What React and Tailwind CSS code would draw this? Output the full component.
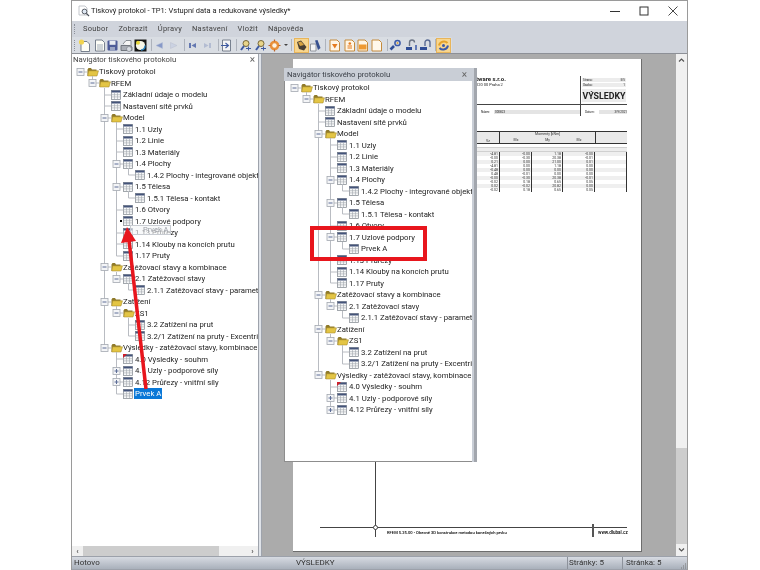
import React from "react";

const font = { fontFamily: 'Roboto, "Open Sans", sans-serif' };

const T = (label, children, extra = {}) => ({ label, children, ...extra });
const F = (label, children, extra = {}) => ({ label, children, folder: true, ...extra });

const head = [T("Základní údaje o modelu"), T("Nastavení sítě prvků")];

const model = (withPrvek) =>
  F("Model", [
    T("1.1 Uzly"),
    T("1.2 Linie"),
    T("1.3 Materiály"),
    T("1.4 Plochy", [T("1.4.2 Plochy - integrované objekty")]),
    T("1.5 Tělesa", [T("1.5.1 Tělesa - kontakt")]),
    T("1.6 Otvory"),
    withPrvek
      ? T("1.7 Uzlové podpory", [T("Prvek A")])
      : T("1.7 Uzlové podpory", null, { dot: true }),
    T("1.13 Průřezy"),
    T("1.14 Klouby na koncích prutu"),
    T("1.17 Pruty"),
  ]);

const rest = (withPrvek) => [
  F("Zatěžovací stavy a kombinace", [
    T("2.1 Zatěžovací stavy", [T("2.1.1 Zatěžovací stavy - parametry")]),
  ]),
  F("Zatížení", [
    F("ZS1", [T("3.2 Zatížení na prut"), T("3.2/1 Zatížení na pruty - Excentricity")]),
  ]),
  F("Výsledky - zatěžovací stavy, kombinace a zatížení", [
    T("4.0 Výsledky - souhrn", null, { flag: true }),
    T("4.1 Uzly - podporové síly", null, { plus: true }),
    T("4.12 Průřezy - vnitřní síly", null, { plus: true }),
    ...(withPrvek ? [] : [T("Prvek A", null, { selected: true })]),
  ]),
];

const tree = (withPrvek) => [
  F("Tiskový protokol", [F("RFEM", [...head, model(withPrvek), ...rest(withPrvek)])]),
];

function Folder() {
  return (
    <svg width="12" height="10" viewBox="0 0 12 10" className="shrink-0">
      <path d="M0.5 2.5 L0.5 9 L9.5 9 L9.5 2.5 L5 2.5 L4 1 L1.5 1 Z" fill="#8f7a2a" />
      <path d="M1.5 3.8 L11.5 3.8 L10 9 L0.8 9 Z" fill="#e3c545" stroke="#9c8226" strokeWidth="0.5" />
    </svg>
  );
}

function TableIcon({ flag }) {
  return (
    <svg width="10" height="10" viewBox="0 0 10 10" className="shrink-0">
      <rect x="0.5" y="0.5" width="9" height="9" fill="#f6f7f8" stroke="#7d838b" strokeWidth="0.7" />
      <rect x="0.5" y="0.5" width="9" height="2" fill="#44547a" />
      <path d="M0.5 4.7H9.5M0.5 6.9H9.5M3.5 2.5V9.5M6.5 2.5V9.5" stroke="#a3a8af" strokeWidth="0.6" />
      {flag && <path d="M0 0L4 0L0 4Z" fill="#d0202a" />}
    </svg>
  );
}

function Guides({ level, ancestors, hasBox, plus, isLast, hasParent, dot }) {
  const w = 12 * (level + 1) + 1;
  const cx = 12 * level + 6;
  const stroke = "#b9bcc2";
  return (
    <svg width={w} height="12" viewBox={`0 0 ${w} 12`} className="shrink-0 overflow-visible">
      {ancestors.map((on, i) =>
        on ? <path key={i} d={`M${12 * i + 6.5} -1V13`} stroke={stroke} strokeWidth="1" /> : null
      )}
      {hasParent && <path d={`M${cx + 0.5} -1V${isLast ? 6 : 13}`} stroke={stroke} strokeWidth="1" />}
      {!dot && <path d={`M${cx + 0.5} 6H${w}`} stroke={stroke} strokeWidth="1" />}
      {hasBox && (
        <g>
          <rect x={cx - 3} y="2.5" width="7" height="7" fill="#f4f5f7" stroke="#a3a8b0" strokeWidth="0.8" />
          <path d={`M${cx - 1.5} 6H${cx + 2.5}`} stroke="#5c6d96" strokeWidth="1" />
          {plus && <path d={`M${cx + 0.5} 4V8`} stroke="#5c6d96" strokeWidth="1" />}
        </g>
      )}
      {dot && <rect x={w - 3} y="5" width="2" height="2" fill="#000" />}
    </svg>
  );
}

function Rows({ nodes, level = 0, ancestors = [], hasParent = false }) {
  return nodes.map((n, i) => {
    const isLast = i === nodes.length - 1;
    const kids = n.children && n.children.length > 0;
    return (
      <React.Fragment key={n.label}>
        <div className="flex h-[11.5px] items-center whitespace-nowrap">
          <Guides
            level={level}
            ancestors={ancestors}
            hasBox={kids || n.plus}
            plus={n.plus}
            isLast={isLast}
            hasParent={hasParent}
            dot={n.dot}
          />
          {n.folder ? <Folder /> : <TableIcon flag={n.flag} />}
          <span
            className={
              n.selected
                ? "ml-[1px] bg-[#0a78d7] px-[1px] text-[7.75px] leading-[11px] text-white"
                : n.folder
                  ? "text-[7.75px] leading-[11px] text-[#1c1c1c]"
                  : "ml-[2px] text-[7.75px] leading-[11px] text-[#1c1c1c]"
            }
          >
            {n.label}
          </span>
        </div>
        {kids && (
          <Rows
            nodes={n.children}
            level={level + 1}
            ancestors={[...ancestors.slice(0, level), hasParent && !isLast]}
            hasParent
          />
        )}
      </React.Fragment>
    );
  });
}

function ToolIcon({ kind, className = "" }) {
  const c = {
    page: (
      <g>
        <path d="M2.5 1H9L11.5 3.5V12H2.5Z" fill="#fdfdf6" stroke="#6b7584" strokeWidth="0.9" />
        <path d="M4 6H10M4 8H10M4 10H10" stroke="#7d8aa0" strokeWidth="0.7" />
      </g>
    ),
    newp: (
      <g>
        <path d="M3 2.5H9L11.5 5V12.5H3Z" fill="#fdfdf6" stroke="#6b7584" strokeWidth="0.9" />
        <circle cx="3.5" cy="3" r="2.6" fill="#f2d44e" />
      </g>
    ),
    save: (
      <g>
        <rect x="1.5" y="1.5" width="10" height="10" rx="1" fill="#4d5b98" />
        <rect x="3.5" y="1.8" width="6" height="4" fill="#e8ebf2" />
        <rect x="4" y="8" width="5" height="3.5" fill="#9aa4c4" />
      </g>
    ),
    print: (
      <g>
        <path d="M3 5L6 1.5H11V7" fill="#f5f5f5" stroke="#70767e" strokeWidth="0.8" />
        <path d="M1 6.5H10L12 8V11.5H1Z" fill="#a9adb5" stroke="#5e636b" strokeWidth="0.8" />
        <circle cx="9" cy="10" r="2.5" fill="#d9dde3" stroke="#70767e" strokeWidth="0.6" />
      </g>
    ),
    spin: (
      <g>
        <rect x="0.5" y="0.5" width="12" height="12" fill="#161616" />
        <circle cx="6.5" cy="6.5" r="4.6" fill="#f6f6e8" />
        <circle cx="4" cy="3.8" r="2" fill="#e6d638" />
        <path d="M11 6.5A4.5 4.5 0 0 1 7 11" stroke="#2f87c4" strokeWidth="1.4" fill="none" />
      </g>
    ),
    left: <path d="M3 6.5L9.5 3.5V9.5Z" fill="#8799c8" stroke="#b3bcd4" strokeWidth="0.5" />,
    right: <path d="M10 6.5L3.5 3.5V9.5Z" fill="#cbd2e2" stroke="#b8bfcf" strokeWidth="0.5" />,
    first: (
      <g fill="#6478b1">
        <rect x="3" y="4" width="2" height="5" />
        <path d="M5.5 6.5L10 4V9Z" />
      </g>
    ),
    last: (
      <g fill="#b3bcd2">
        <rect x="8" y="4" width="2" height="5" />
        <path d="M7.5 6.5L3 4V9Z" />
      </g>
    ),
    goto: (
      <g>
        <path d="M2.5 1H10.5V12H2.5Z" fill="#f5f5f5" stroke="#6b7584" strokeWidth="0.9" />
        <path d="M1 6.5H8M5.5 4L8.5 6.5L5.5 9" stroke="#3e5aa0" strokeWidth="1.1" fill="none" />
      </g>
    ),
    find: (
      <g>
        <circle cx="7" cy="4.5" r="3" fill="#e9d58a" stroke="#6a5a2c" strokeWidth="0.9" />
        <path d="M5 7L2 11" stroke="#3e5aa0" strokeWidth="2" />
        <path d="M7 9.5H12M9.5 7.5V11.5" stroke="#3e5aa0" strokeWidth="1" />
      </g>
    ),
    gear: (
      <g>
        <circle cx="6.5" cy="6.5" r="4.8" fill="#e8903a" />
        <circle cx="6.5" cy="6.5" r="2.2" fill="#fdf3e3" />
        <path d="M6.5 0.5V2.5M6.5 10.5V12.5M0.5 6.5H2.5M10.5 6.5H12.5" stroke="#b9642a" strokeWidth="1.2" />
      </g>
    ),
    hand: (
      <g>
        <path d="M2 3L6 1.5L11.5 8L9 11.5L4 10Z" fill="#4a4034" />
        <path d="M3 3.5L6 2.5L9 6L5 7Z" fill="#d9a441" />
      </g>
    ),
    hand2: (
      <g>
        <path d="M1.5 5H7V12H1.5Z" fill="#f3f4f6" stroke="#7d838c" strokeWidth="0.8" />
        <path d="M6 1.5L8.5 1L11.5 9L9 11Z" fill="#36508f" />
      </g>
    ),
    docO: (
      <g>
        <path d="M2 1H9L11.5 3.5V12H2Z" fill="#fff6e6" stroke="#c48a3c" strokeWidth="1" />
        <path d="M4 5H9.5L6.8 9.5Z" fill="#e57b1f" />
      </g>
    ),
    docB: (
      <g>
        <path d="M2 1H9L11.5 3.5V12H2Z" fill="#fff6e6" stroke="#c48a3c" strokeWidth="1" />
        <path d="M4.5 7H9M4.5 9H9" stroke="#e57b1f" strokeWidth="1.1" />
        <circle cx="6.8" cy="4.5" r="1.3" fill="#e57b1f" />
      </g>
    ),
    docF: (
      <g>
        <path d="M2 1H9L11.5 3.5V12H2Z" fill="#fff6e6" stroke="#c48a3c" strokeWidth="1" />
        <rect x="3" y="5.5" width="7.5" height="5" fill="#ee9a33" />
      </g>
    ),
    docE: <path d="M2 1H9L11.5 3.5V12H2Z" fill="#fff8ec" stroke="#c48a3c" strokeWidth="1" />,
    link1: (
      <g>
        <path d="M1.5 10.5L5 7" stroke="#2f4d96" strokeWidth="2.6" />
        <circle cx="8.5" cy="4" r="2.6" fill="none" stroke="#3b5aa8" strokeWidth="1.5" />
        <circle cx="8.5" cy="4" r="1" fill="#d9a441" />
      </g>
    ),
    link2: (
      <g>
        <path d="M1 9.5H7" stroke="#2f4d96" strokeWidth="3" />
        <path d="M4.5 7V3.5A2.5 2.5 0 0 1 9.5 3.5" fill="none" stroke="#6d7686" strokeWidth="1.4" />
        <path d="M11 6V11" stroke="#3b5aa8" strokeWidth="1.5" />
      </g>
    ),
    link3: (
      <g>
        <path d="M1 9.5H8" stroke="#2f4d96" strokeWidth="3" />
        <path d="M6 7V3.5A2.5 2.5 0 0 1 11 3.5V8" fill="none" stroke="#5a6b94" strokeWidth="1.4" />
      </g>
    ),
    ring: (
      <g>
        <path d="M10.5 4A5 5 0 0 0 2 6.5" fill="none" stroke="#e5a32a" strokeWidth="2" />
        <path d="M2.5 9A5 5 0 0 0 11 6.5" fill="none" stroke="#3b5aa8" strokeWidth="2" />
        <circle cx="6.5" cy="6.5" r="1.5" fill="#3b5aa8" />
      </g>
    ),
  }[kind];
  return (
    <svg width="13" height="13" viewBox="0 0 13 13" className={"shrink-0 " + className}>
      {c}
    </svg>
  );
}

function Active({ kind, className = "" }) {
  return (
    <div className={"flex h-[15px] w-[15px] shrink-0 items-center justify-center border border-[#e8b55b] bg-[#f8d68e] " + className}>
      <ToolIcon kind={kind} />
    </div>
  );
}

const Sep = ({ className = "" }) => <div className={"h-[12px] w-px shrink-0 bg-[#aeb3bc] " + className} />;

function Toolbar() {
  return (
    <div className="flex h-[16px] w-[380px] items-center rounded-r-[2px] bg-[#d9dde3] pl-[2px]">
      <div className="mr-[2px] h-[11px] w-[2px] shrink-0 border-l border-dotted border-[#8b909a]" />
      <ToolIcon kind="newp" />
      <ToolIcon kind="page" className="ml-[2px]" />
      <ToolIcon kind="save" />
      <ToolIcon kind="print" className="ml-[1px]" />
      <ToolIcon kind="spin" className="ml-[1px]" />
      <Sep className="ml-[3.5px]" />
      <ToolIcon kind="left" className="ml-[1.5px]" />
      <ToolIcon kind="right" className="ml-[1px]" />
      <Sep className="ml-[3.5px]" />
      <ToolIcon kind="first" className="ml-[1.5px]" />
      <ToolIcon kind="last" className="ml-[2px]" />
      <Sep className="ml-[3.5px]" />
      <ToolIcon kind="goto" className="ml-[1.5px]" />
      <Sep className="ml-[2.5px]" />
      <ToolIcon kind="find" className="ml-[2.5px]" />
      <ToolIcon kind="find" className="ml-[2px]" />
      <ToolIcon kind="gear" className="ml-[1px]" />
      <span className="ml-[2.5px] h-0 w-0 shrink-0 border-x-[2px] border-t-[2px] border-x-transparent border-t-[#444]" />
      <Sep className="ml-[3px]" />
      <Active kind="hand" className="ml-[2.5px]" />
      <ToolIcon kind="hand2" />
      <Sep className="ml-[2.5px]" />
      <ToolIcon kind="docO" className="ml-[2.5px]" />
      <ToolIcon kind="docB" className="ml-[2px]" />
      <ToolIcon kind="docF" />
      <ToolIcon kind="docE" className="ml-[1px]" />
      <Sep className="ml-[3.5px]" />
      <ToolIcon kind="link1" className="ml-[1.5px]" />
      <ToolIcon kind="link2" className="ml-[3px]" />
      <ToolIcon kind="link3" className="ml-[1px]" />
      <Sep className="ml-[2.5px]" />
      <Active kind="ring" className="ml-[0.5px]" />
    </div>
  );
}

const dataRows = [
  ["-4.81", "-0.00", "1.18", "-0.00"],
  ["-0.00", "-0.30", "20.38", "-0.01"],
  ["0.21", "0.00", "21.00", "0.01"],
  ["-4.81", "0.00", "1.18", "0.00"],
  ["-0.48", "0.00", "0.00", "0.00"],
  ["0.48", "-0.01", "0.00", "0.00"],
  ["-0.00", "-0.30", "20.38", "-0.01"],
  ["-0.02", "0.18", "0.65", "0.05"],
  ["0.02", "-0.02", "20.82", "0.00"],
  ["-0.02", "0.18", "0.65", "0.05"],
];

function DocPage() {
  return (
    <div className="relative ml-[31px] mt-[5px] h-[493px] w-[349px] border-b border-r border-[#6d6d6d] bg-white text-[#222]">
      <div className="flex h-[29px] pl-[183px] pt-[17px]">
        <div className="w-[104px] leading-[5px]">
          <div className="text-[6px] font-bold">tware s.r.o.</div>
          <div className="mt-[1px] text-[4px]">120 00 Praha 2</div>
        </div>
      </div>
      <div className="absolute left-[287px] top-[17px] h-[40px] w-px bg-[#444]" />
      <div className="absolute left-[289px] top-[19px] w-[44px]">
        <div className="flex h-[4px] items-center justify-between bg-[#ececec] px-px text-[3px]">
          <span>Strana:</span>
          <span>5/5</span>
        </div>
        <div className="mt-[1px] flex h-[4px] items-center justify-between bg-[#ececec] px-px text-[3px]">
          <span>Osoba:</span>
          <span>1</span>
        </div>
        <div className="mt-[2px] flex h-[13px] items-center justify-center bg-[#ececec] pt-[1px] text-[8.8px] font-bold leading-none text-[#222]">
          VÝSLEDKY
        </div>
      </div>
      <div className="ml-[183px] mt-[16px] h-px w-[151px] bg-[#444]" />
      <div className="ml-[188px] mt-[5px] flex h-[4px] w-[146px] items-center gap-[1px] text-[3px]">
        <span className="w-[12px]">Název:</span>
        <span className="w-[87px] bg-[#e4e4e4] px-px">000823</span>
        <span className="ml-[2px] w-[14px] pl-[1px]">Datum:</span>
        <span className="flex-1 bg-[#e4e4e4] text-right">3/9/2021</span>
      </div>
      <div className="ml-[184px] mt-[17px] w-[150px] border-t border-[#333] text-[3.5px] leading-[4px] text-[#333]">
        <div className="grid grid-cols-[23px_32px_31px_32px_32px] border-b border-[#333] bg-[#e9e9e9]">
          <div className="row-span-2 flex h-[11px] items-end justify-center border-r border-[#333]">Vz</div>
          <div className="col-span-3 text-center">Momenty [kNm]</div>
          <div className="row-span-2 border-l border-[#333]" />
          <div className="flex items-center justify-center">Mx</div>
          <div className="flex items-center justify-center">My</div>
          <div className="flex items-center justify-center">Mz</div>
        </div>
        <div className="mt-[3px] h-[5px] border-y border-[#d0d0d0] bg-[#ededed]" />
        {dataRows.map((r, i) => (
          <div
            key={i}
            className={"grid h-[4px] grid-cols-[23px_32px_31px_32px_32px] leading-[4px] " + (i % 2 ? "bg-white" : "bg-[#efefef]")}
          >
            {r.map((v, j) => (
              <div key={j} className="border-r border-[#333] pr-[1px] text-right">
                {v}
              </div>
            ))}
            <div className="border-r border-[#333]" />
          </div>
        ))}
      </div>
      <div className="absolute left-[82px] top-[402px] h-[76px] w-px bg-[#444]" />
      <div className="absolute left-[27px] top-[468px] h-px w-[307px] bg-[#444]" />
      <div className="absolute left-[80px] top-[466px] h-[5px] w-[5px] rounded-full border border-[#444] bg-white" />
      <div className="absolute left-[94px] top-[471px] whitespace-nowrap text-[4.1px] font-medium leading-[5px] text-black">
        RFEM 5.25.00 - Obecné 3D konstrukce metodou konečných prvků
      </div>
      <div className="absolute left-[299px] top-[465px] h-[13px] w-[2px] bg-[#555]" />
      <div className="absolute left-[305px] top-[471px] text-[4.6px] font-medium leading-[5px] text-black">www.dlubal.cz</div>
    </div>
  );
}

function Panel() {
  return (
    <div className="absolute left-[284px] top-[68px] flex h-[394px] w-[193px] flex-col bg-[#c9ced6] pr-[5px]">
      <div className="flex h-[13px] items-center justify-between pl-[3px] pr-[2px] text-[7.75px] leading-none text-[#3a3f47]">
        <span>Navigátor tiskového protokolu</span>
        <span className="mr-[3px] text-[10px] text-[#666]">×</span>
      </div>
      <div className="relative flex-1 overflow-hidden border-b border-l border-[#8d8d8d] bg-white pl-[3px] pt-[1px]">
        <Rows nodes={tree(true)} />
      </div>
      <div className="absolute right-0 top-0 h-full w-[3px] bg-[#a2a6ad]" />
    </div>
  );
}

export default function App() {
  return (
    <div className="relative h-[570px] w-[760px] overflow-hidden bg-white blur-[0.35px]" style={font}>
      <div className="ml-[71px] flex h-[570px] w-[617px] flex-col border-x border-t border-[#9a9a9a] bg-white">
        {/* title bar */}
        <div className="flex h-[20px] items-center pl-[6px] pr-[9px]">
          <svg width="12" height="12" viewBox="0 0 12 12" className="shrink-0">
            <path d="M1 1H7L9 3V10H1Z" fill="#fff" stroke="#b5b9bf" strokeWidth="0.8" />
            <circle cx="6.5" cy="6.5" r="2.4" fill="#dfe8f3" stroke="#4a4f58" strokeWidth="0.9" />
            <path d="M8.3 8.3L11 11" stroke="#4a4f58" strokeWidth="1.2" />
          </svg>
          <span className="ml-[1px] text-[7.5px] leading-none text-[#222]">
            Tiskový protokol - TP1: Vstupní data a redukované výsledky*
          </span>
          <div className="ml-auto flex items-center gap-[19px]">
            <svg width="10" height="10" viewBox="0 0 10 10">
              <path d="M0 5.5H10" stroke="#333" strokeWidth="1" />
            </svg>
            <svg width="10" height="10" viewBox="0 0 10 10">
              <rect x="1" y="1" width="8" height="8" fill="none" stroke="#333" strokeWidth="1" />
            </svg>
            <svg width="10" height="10" viewBox="0 0 10 10">
              <path d="M0.5 0.5L9.5 9.5M9.5 0.5L0.5 9.5" stroke="#333" strokeWidth="0.9" />
            </svg>
          </div>
        </div>
        {/* menu */}
        <div className="flex h-[16px] items-center gap-[10px] bg-[#d0d4dc] pl-[2px] text-[7.5px] leading-none tracking-[0.25px] text-[#444]">
          <div className="mr-[-3px] h-[10px] w-[2px] border-l border-dotted border-[#8b909a]" />
          <span>Soubor</span>
          <span>Zobrazit</span>
          <span>Úpravy</span>
          <span>Nastavení</span>
          <span>Vložit</span>
          <span>Nápověda</span>
        </div>
        {/* toolbar */}
        <div className="h-[17px] border-b border-[#8d9097] bg-[#d0d4dc]">
          <Toolbar />
        </div>
        {/* main */}
        <div className="flex min-h-0 flex-1">
          <div className="flex w-[186px] flex-col">
            <div className="flex h-[11px] items-center justify-between pl-[1px] pr-[3px] text-[7.75px] leading-none text-[#444]">
              <span>Navigátor tiskového protokolu</span>
              <span className="text-[10px] text-[#666]">×</span>
            </div>
            <div className="min-h-0 flex-1 overflow-hidden pl-[2px] pt-[1px]">
              <Rows nodes={tree(false)} />
            </div>
            <div className="flex h-[10px] items-center bg-[#f0f0f0]">
              <span className="w-[11px] text-center text-[8px] font-bold leading-none text-[#555]">‹</span>
              <div className="h-full w-[136px] bg-[#cdcdcd]" />
              <span className="ml-auto w-[11px] text-center text-[8px] font-bold leading-none text-[#555]">›</span>
            </div>
          </div>
          <div className="w-[4px] border-x border-[#9ea3ac] bg-[#dfe3e9]" />
          <div className="flex-1 bg-[#ababab]">
            <DocPage />
          </div>
          <div className="flex w-[11px] flex-col items-center bg-[#f0f0f0]">
            <svg width="7" height="12" viewBox="0 0 7 12" className="shrink-0">
              <path d="M1 7.5L3.5 5L6 7.5" fill="none" stroke="#555" strokeWidth="1.2" />
            </svg>
            <div className="flex-1" />
            <div className="h-[96px] w-full bg-[#cdcdcd]" />
            <svg width="7" height="12" viewBox="0 0 7 12" className="shrink-0">
              <path d="M1 4.5L3.5 7L6 4.5" fill="none" stroke="#555" strokeWidth="1.2" />
            </svg>
          </div>
        </div>
        {/* status */}
        <div className="relative flex h-[14px] items-center border-y border-[#9ca1aa] bg-gradient-to-b from-[#d7dbe2] to-[#a9b0bb] text-[8px] leading-none text-[#333]">
          <span className="w-[224px] pl-[2px]">Hotovo</span>
          <span className="w-[271px]">VÝSLEDKY</span>
          <span className="h-full w-[55px] border-l border-[#8d929b] pl-[1px] leading-[12px]">Stránky: 5</span>
          <span className="h-full flex-1 border-l border-[#8d929b] pl-[3px] leading-[12px]">Stránka: 5</span>
          <svg width="7" height="7" viewBox="0 0 7 7" className="absolute bottom-0 right-0">
            <path d="M5.5 1.5V2.5M5.5 3.5V4.5M3.5 3.5V4.5M5.5 5.5V6.5M3.5 5.5V6.5M1.5 5.5V6.5" stroke="#777" strokeWidth="1" />
          </svg>
        </div>
      </div>

      <Panel />

      {/* drag ghost */}
      <div className="absolute left-[130px] top-[225px] flex h-[10px] items-center border border-[#c8ccd2] bg-[#f4f5f7]/60 pl-[12px] pr-[2px] text-[7.5px] leading-none text-[#9b9fa6]">
        Prvek A
      </div>
      {/* red callout */}
      <div className="absolute left-[310px] top-[226px] h-[35px] w-[117px] border-[4px] border-[#e8161d]" />
      <svg className="absolute left-0 top-0" width="760" height="570" viewBox="0 0 760 570">
        <path d="M146 389L129 240" stroke="#e8161d" strokeWidth="3.5" />
        <path d="M127 227L121 243L136 241Z" fill="#e8161d" />
      </svg>
    </div>
  );
}
